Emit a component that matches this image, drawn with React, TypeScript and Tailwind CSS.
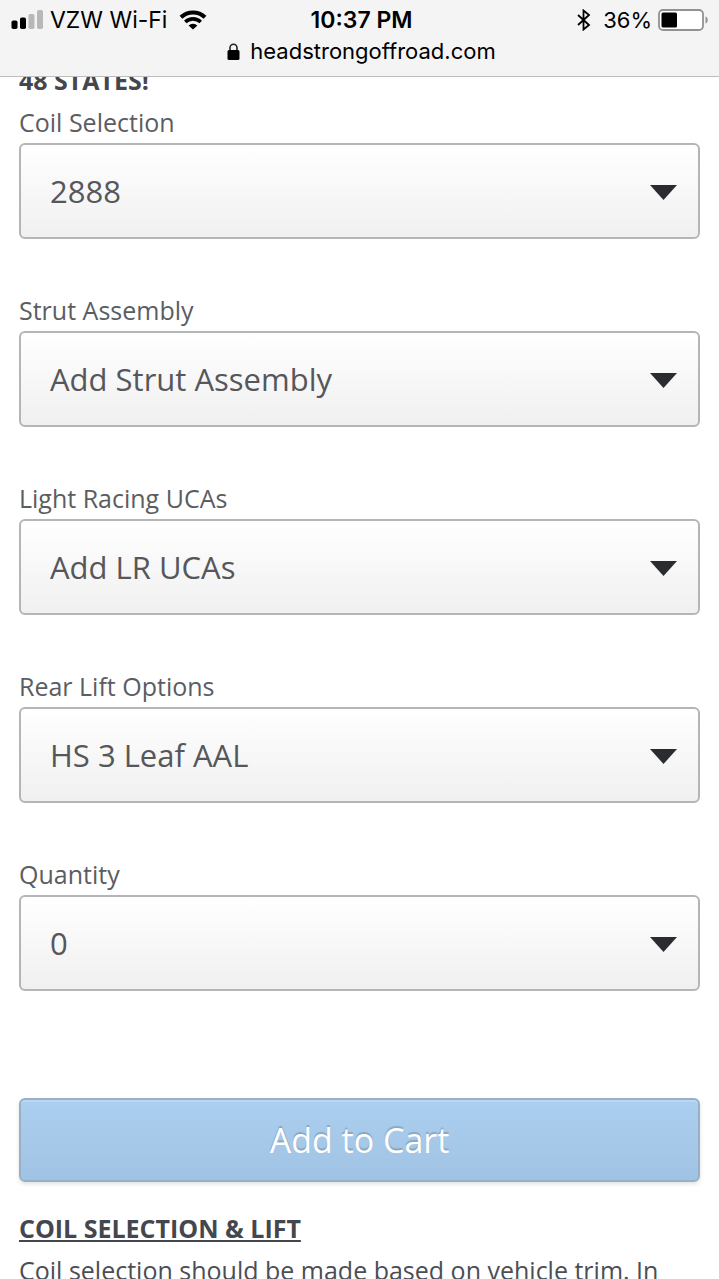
type Field = {
  id: string;
  label: string;
  value: string;
};

const fields: Field[] = [
  { id: "coil", label: "Coil Selection", value: "2888" },
  { id: "strut", label: "Strut Assembly", value: "Add Strut Assembly" },
  { id: "ucas", label: "Light Racing UCAs", value: "Add LR UCAs" },
  { id: "rear", label: "Rear Lift Options", value: "HS 3 Leaf AAL" },
  { id: "quantity", label: "Quantity", value: "0" },
];

function SignalIcon() {
  return (
    <svg width="33" height="20" viewBox="0 0 33 20" aria-hidden="true">
      <rect x="0.5" y="10.5" width="6" height="8.5" rx="1.8" fill="#000" />
      <rect x="9" y="7.5" width="6" height="11.5" rx="1.8" fill="#000" />
      <rect x="17.5" y="4" width="6" height="15" rx="1.8" fill="#b8b8b8" />
      <rect x="26" y="0" width="6" height="19" rx="1.8" fill="#b8b8b8" />
    </svg>
  );
}

function WifiIcon() {
  return (
    <svg width="28" height="20" viewBox="0 0 28 20" fill="none" aria-hidden="true">
      <path d="M2 7.3a17.2 17.2 0 0 1 24 0" stroke="#000" strokeWidth="4" />
      <path d="M6.3 12a11 11 0 0 1 15.4 0" stroke="#000" strokeWidth="3.6" />
      <path d="M9.6 15.4a6.4 6.4 0 0 1 8.8 0L14 19.6z" fill="#000" />
    </svg>
  );
}

function BluetoothIcon() {
  return (
    <svg width="14" height="22" viewBox="0 0 14 22" fill="none" aria-hidden="true">
      <path
        d="M1 6l11 10-5.5 4.5v-19L12 6 1 16"
        stroke="#000"
        strokeWidth="1.8"
      />
    </svg>
  );
}

function BatteryIcon() {
  return (
    <svg width="51" height="22" viewBox="0 0 51 22" aria-hidden="true">
      <rect x="1" y="1" width="44" height="20" rx="4" fill="#fff" stroke="#929292" strokeWidth="1.8" />
      <rect x="3.5" y="3.5" width="15.5" height="15" rx="1.5" fill="#000" />
      <path d="M47.5 7.5c3 1 3 6 0 7z" fill="#929292" />
    </svg>
  );
}

function LockIcon() {
  return (
    <svg width="13" height="17" viewBox="0 0 13 17" aria-hidden="true">
      <path d="M3 8V4.8a3.5 3.5 0 0 1 7 0V8" fill="none" stroke="#222" strokeWidth="1.6" />
      <rect x="0.5" y="7" width="12" height="10" rx="1.5" fill="#000" />
    </svg>
  );
}

function BrowserHeader() {
  return (
    <header className="h-[77px] shrink-0 border-b border-[#bdbdbd] bg-[#f4f4f4] font-['Inter',sans-serif] text-[22px] text-black">
      <div className="grid h-10 grid-cols-[1fr_auto_1fr] items-center pl-[14px] pr-[10px]">
        <div className="-ml-[3px] flex items-center">
          <SignalIcon />
          <span className="ml-[6px] mr-3 text-[23px]">VZW Wi-Fi</span>
          <WifiIcon />
        </div>
        <span className="text-[23px] font-semibold">10:37 PM</span>
        <div className="flex items-center justify-end">
          <BluetoothIcon />
          <span className="ml-3 mr-[6px]">36%</span>
          <BatteryIcon />
        </div>
      </div>
      <div className="flex h-[22px] items-center justify-center gap-[10px] pl-1">
        <LockIcon />
        <span>headstrongoffroad.com</span>
      </div>
    </header>
  );
}

function SelectField({ id, label, value }: Field) {
  return (
    <div className="mb-[50px]">
      <label htmlFor={id} className="block leading-[42px] text-[#5b5d61]">
        {label}
      </label>
      <div className="relative">
        <select
          id={id}
          defaultValue={value}
          className="block h-24 w-full appearance-none rounded-md border-2 border-[#b5b5b7] bg-linear-to-b from-white to-[#f0f0f0] pl-[29px] pr-16 text-[31px] text-[#55575b]"
        >
          <option value={value}>{value}</option>
        </select>
        <svg
          width="27"
          height="15"
          viewBox="0 0 27 15"
          className="pointer-events-none absolute right-[23px] top-[42px]"
          aria-hidden="true"
        >
          <path d="M0 0h27L13.5 15z" fill="#2a2c30" />
        </svg>
      </div>
    </div>
  );
}

export default function App() {
  return (
    <div className="flex h-screen flex-col overflow-hidden bg-white font-['Open_Sans',sans-serif] text-[25px] text-[#4b4e55]">
      <BrowserHeader />
      <main className="flex-1 overflow-hidden px-[19px]">
        <p className="-mt-[18px] font-bold leading-[42px] text-[#44474e]">48 STATES!</p>
        <form onSubmit={(e) => e.preventDefault()}>
          {fields.map((field) => (
            <SelectField key={field.id} {...field} />
          ))}
          <button
            type="submit"
            className="mt-[107px] block h-[84px] w-full rounded-md border-2 border-[#98afc8] bg-linear-to-b from-[#abcff0] to-[#a1c3e3] text-[34px] text-white shadow-[0_2px_4px_rgba(0,0,0,0.12),inset_0_2px_0_rgba(255,255,255,0.2)] [text-shadow:0_-2px_1px_rgba(0,0,0,0.18)]"
          >
            Add to Cart
          </button>
        </form>
        <h2 className="mt-[25px] font-bold leading-[42px] text-[#44474e] underline">
          COIL SELECTION &amp; LIFT
        </h2>
        <p className="leading-[42px]">
          Coil selection should be made based on vehicle trim. In
        </p>
      </main>
    </div>
  );
}
